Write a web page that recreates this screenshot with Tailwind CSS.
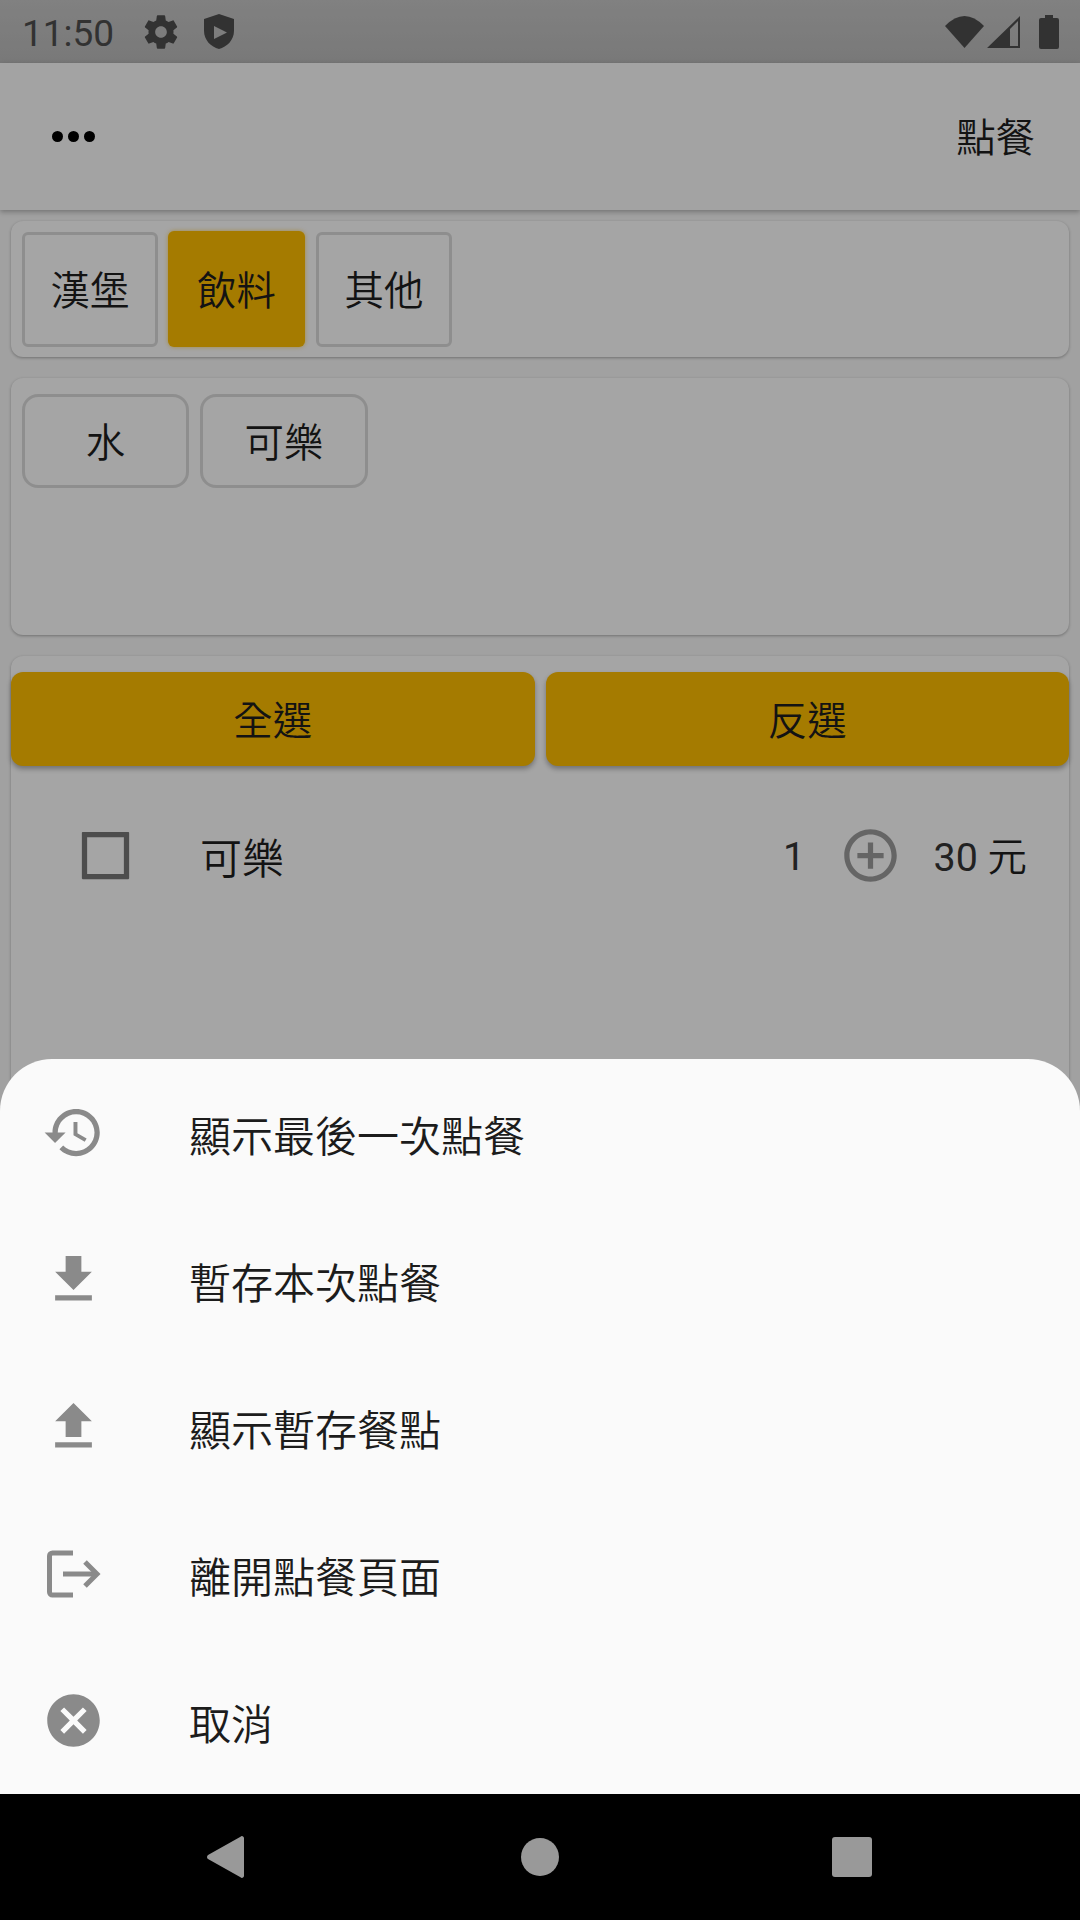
<!DOCTYPE html>
<html lang="zh-Hant">
<head>
  <meta charset="UTF-8" />
  <meta name="viewport" content="width=device-width, initial-scale=1.0"/>
  <title>點餐</title>
  <script src="https://cdn.jsdelivr.net/npm/@tailwindcss/browser@4"></script>
</head>
<body class="bg-black font-['Roboto','Noto_Sans_CJK_TC',sans-serif]">
  <div class="w-[1080px] h-[1920px] flex flex-col overflow-hidden">

    <div class="relative h-[1794px] flex flex-col overflow-hidden bg-[#ededed]">
      <!-- status bar -->
      <div class="h-[63px] shrink-0 flex items-center pl-[22px] pr-[21px] bg-linear-to-b from-[#bebebe] to-[#b2b2b2] text-[#4b4b4b]">
        <span class="text-[37px] leading-none w-[119px] pt-[4px]">11:50</span>
        <svg class="w-[40px] h-[40px] fill-[#4b4b4b]" viewBox="0 0 24 24"><path d="M19.43 12.98c.04-.32.07-.64.07-.98s-.03-.66-.07-.98l2.11-1.65c.19-.15.24-.42.12-.64l-2-3.46c-.12-.22-.39-.3-.61-.22l-2.49 1c-.52-.4-1.08-.73-1.69-.98l-.38-2.65C14.46 2.18 14.25 2 14 2h-4c-.25 0-.46.18-.49.42l-.38 2.65c-.61.25-1.17.59-1.69.98l-2.49-1c-.23-.09-.49 0-.61.22l-2 3.46c-.13.22-.07.49.12.64l2.11 1.65c-.04.32-.07.65-.07.98s.03.66.07.98l-2.11 1.65c-.19.15-.24.42-.12.64l2 3.46c.12.22.39.3.61.22l2.49-1c.52.4 1.08.73 1.69.98l.38 2.65c.03.24.24.42.49.42h4c.25 0 .46-.18.49-.42l.38-2.65c.61-.25 1.17-.59 1.69-.98l2.49 1c.23.09.49 0 .61-.22l2-3.46c.12-.22.07-.49-.12-.64l-2.11-1.65zM12 15.5c-1.93 0-3.5-1.57-3.5-3.5s1.57-3.5 3.5-3.5 3.5 1.57 3.5 3.5-1.57 3.5-3.5 3.5z"/></svg>
        <svg class="w-[30px] h-[35px] ml-[23px] fill-[#4b4b4b]" viewBox="0 0 30 35"><path fill-rule="evenodd" d="M15 0 L30 5 V17 C30 26 23 33 15 35 C7 33 0 26 0 17 V5 Z M10 12 V25 L23 18.5 Z"/></svg>
        <div class="flex-1"></div>
        <svg class="w-[39px] h-[32px] fill-[#4b4b4b]" viewBox="0 0 39 32"><path d="M0 10 Q19.5 -10 39 10 L19.5 32 Z"/></svg>
        <svg class="w-[33px] h-[32px] ml-[3px] fill-[#4b4b4b]" viewBox="0 0 33 32"><path fill-rule="evenodd" d="M0 32 L33 0 V32 Z M23 30 H31 V5 L23 13 Z"/></svg>
        <svg class="w-[20px] h-[34px] ml-[19px] fill-[#4b4b4b]" viewBox="0 0 20 34"><path d="M6 0 H14 V3 H18 A2 2 0 0 1 20 5 V32 A2 2 0 0 1 18 34 H2 A2 2 0 0 1 0 32 V5 A2 2 0 0 1 2 3 H6 Z"/></svg>
      </div>

      <!-- app bar -->
      <div class="relative z-10 h-[147px] shrink-0 flex items-center justify-between pl-[52px] pr-[45px] bg-[#f0f0f0] shadow-[0_2px_5px_rgba(0,0,0,0.28)] text-[#1c1c1c]">
        <div class="flex gap-[5.5px]">
          <span class="w-[10.5px] h-[10.5px] rounded-full bg-black"></span>
          <span class="w-[10.5px] h-[10.5px] rounded-full bg-black"></span>
          <span class="w-[10.5px] h-[10.5px] rounded-full bg-black"></span>
        </div>
        <span class="text-[39.4px] leading-none font-[350] pt-[4px]">點餐</span>
      </div>

      <main class="flex-1 flex flex-col px-[11px] pt-[11px] text-[#1c1c1c]">
        <!-- categories -->
        <div class="h-[136px] shrink-0 flex items-center gap-[10px] px-[11px] rounded-[12px] bg-[#f3f3f3] shadow-[0_1px_3px_rgba(0,0,0,0.3)]">
          <button class="w-[136px] h-[115px] flex items-center justify-center border-[3px] border-[#d2d2d2] rounded-[6px] text-[39.4px] font-[350] pt-[6px]">漢堡</button>
          <button class="w-[137px] h-[116px] mr-px flex items-center justify-center rounded-[6px] bg-[#f4b500] text-[39.4px] font-[350] pt-[6px] shadow-[0_0_4px_rgba(244,181,0,0.6)]">飲料</button>
          <button class="w-[136px] h-[115px] flex items-center justify-center border-[3px] border-[#d2d2d2] rounded-[6px] text-[39.4px] font-[350] pt-[6px]">其他</button>
        </div>

        <!-- items -->
        <div class="h-[257px] shrink-0 mt-[21px] flex items-start gap-[11px] px-[11px] pt-[16px] rounded-[12px] bg-[#f3f3f3] shadow-[0_1px_3px_rgba(0,0,0,0.3)]">
          <button class="w-[167px] h-[94px] flex items-center justify-center border-[3px] border-[#d2d2d2] rounded-[16px] text-[39.4px] font-[350] pt-[5px]">水</button>
          <button class="w-[168px] h-[94px] flex items-center justify-center border-[3px] border-[#d2d2d2] rounded-[16px] text-[39.4px] font-[350] pt-[5px]">可樂</button>
        </div>

        <!-- order -->
        <div class="flex-1 mt-[21px] pt-[16px] rounded-t-[12px] bg-[#f3f3f3] shadow-[0_1px_3px_rgba(0,0,0,0.3)]">
          <div class="flex gap-[11px]">
            <button class="flex-1 h-[94px] flex items-center justify-center rounded-[12px] bg-[#f4b500] text-[39.4px] font-[350] pt-[5px] shadow-[0_3px_5px_rgba(0,0,0,0.3)]">全選</button>
            <button class="flex-1 h-[94px] flex items-center justify-center rounded-[12px] bg-[#f4b500] text-[39.4px] font-[350] pt-[5px] shadow-[0_3px_5px_rgba(0,0,0,0.3)]">反選</button>
          </div>
          <div class="mt-[58px] h-[63px] flex items-center pl-[63px] pr-[42px]">
            <svg class="w-[63px] h-[63px] fill-[#727272]" viewBox="0 0 24 24"><path fill-rule="evenodd" d="M3.3 3H20.7A.3 .3 0 0 1 21 3.3V20.7A.3 .3 0 0 1 20.7 21H3.3A.3 .3 0 0 1 3 20.7V3.3A.3 .3 0 0 1 3.3 3ZM5 5V19H19V5Z"/></svg>
            <span class="flex-1 ml-[63px] text-[42px] leading-none font-[350] pt-[8px]">可樂</span>
            <span class="text-[39.4px] leading-none pt-[2px] text-[#333]">1</span>
            <svg class="w-[63px] h-[63px] ml-[34px] fill-[#969696]" viewBox="0 0 24 24"><path d="M13 7h-2v4H7v2h4v4h2v-4h4v-2h-4V7zm-1-5C6.48 2 2 6.48 2 12s4.48 10 10 10 10-4.48 10-10S17.52 2 12 2zm0 18c-4.41 0-8-3.59-8-8s3.59-8 8-8 8 3.59 8 8-3.59 8-8 8z"/></svg>
            <span class="ml-[31.5px] text-[39.4px] leading-none pt-[4px] text-[#333]">30 <span class="font-[350] text-[#1c1c1c]">元</span></span>
          </div>
        </div>
      </main>

      <!-- scrim -->
      <div class="absolute inset-0 z-20 bg-black/[0.32]"></div>

      <!-- bottom sheet -->
      <div class="absolute left-0 right-0 bottom-0 z-30 rounded-t-[52px] bg-[#fafafa] text-[#1c1c1c]">
        <div class="h-[147px] flex items-center pl-[42px]">
          <svg class="w-[63px] h-[63px] fill-[#8a8a8a]" viewBox="0 0 24 24"><path d="M13 3c-4.97 0-9 4.03-9 9H1l3.89 3.89.07.14L9 12H6c0-3.87 3.13-7 7-7s7 3.13 7 7-3.13 7-7 7c-1.93 0-3.68-.79-4.94-2.06l-1.42 1.42C8.27 19.99 10.51 21 13 21c4.97 0 9-4.03 9-9s-4.03-9-9-9zm-1 5v5l4.28 2.54.72-1.21-3.5-2.08V8H12z"/></svg>
          <span class="ml-[84px] text-[42px] leading-none font-[350] pt-[10px]">顯示最後一次點餐</span>
        </div>
        <div class="h-[147px] flex items-center pl-[42px]">
          <svg class="w-[63px] h-[63px] fill-[#8a8a8a]" viewBox="0 0 24 24"><path d="M19 9h-4V3H9v6H5l7 7 7-7zM5 18v2h14v-2H5z"/></svg>
          <span class="ml-[84px] text-[42px] leading-none font-[350] pt-[10px]">暫存本次點餐</span>
        </div>
        <div class="h-[147px] flex items-center pl-[42px]">
          <svg class="w-[63px] h-[63px] fill-[#8a8a8a]" viewBox="0 0 24 24"><path d="M9 16h6v-6h4l-7-7-7 7h4zm-4 2h14v2H5z"/></svg>
          <span class="ml-[84px] text-[42px] leading-none font-[350] pt-[10px]">顯示暫存餐點</span>
        </div>
        <div class="h-[147px] flex items-center pl-[42px]">
          <svg class="w-[63px] h-[63px] fill-none stroke-[#8a8a8a] stroke-[5]" viewBox="0 0 63 63"><path d="M31 11 H10.5 A3 3 0 0 0 7.5 14 V50 A3 3 0 0 0 10.5 53 H31"/><path d="M21 32 H54"/><path d="M43 20 L55 32 L43 44"/></svg>
          <span class="ml-[84px] text-[42px] leading-none font-[350] pt-[10px]">離開點餐頁面</span>
        </div>
        <div class="h-[147px] flex items-center pl-[42px]">
          <svg class="w-[63px] h-[63px] fill-[#8a8a8a]" viewBox="0 0 24 24"><path d="M12 2C6.47 2 2 6.47 2 12s4.47 10 10 10 10-4.47 10-10S17.53 2 12 2zm5 13.59L15.59 17 12 13.41 8.41 17 7 15.59 10.59 12 7 8.41 8.41 7 12 10.59 15.59 7 17 8.41 13.41 12 17 15.59z"/></svg>
          <span class="ml-[84px] text-[42px] leading-none font-[350] pt-[10px]">取消</span>
        </div>
      </div>
    </div>

    <!-- nav bar -->
    <div class="h-[126px] shrink-0 flex items-center justify-between pl-[207px] pr-[208px] bg-black">
      <svg class="w-[37px] h-[42px] fill-[#999]" viewBox="0 0 37 42"><path d="M33.5 0.8 A2 2 0 0 1 37 2 V40 A2 2 0 0 1 33.5 41.2 L1 23 A2.5 2.5 0 0 1 1 19 Z"/></svg>
      <div class="w-[38px] h-[38px] ml-[4px] rounded-full bg-[#999]"></div>
      <div class="w-[40px] h-[40px] rounded-[3px] bg-[#999]"></div>
    </div>
  </div>
</body>
</html>
